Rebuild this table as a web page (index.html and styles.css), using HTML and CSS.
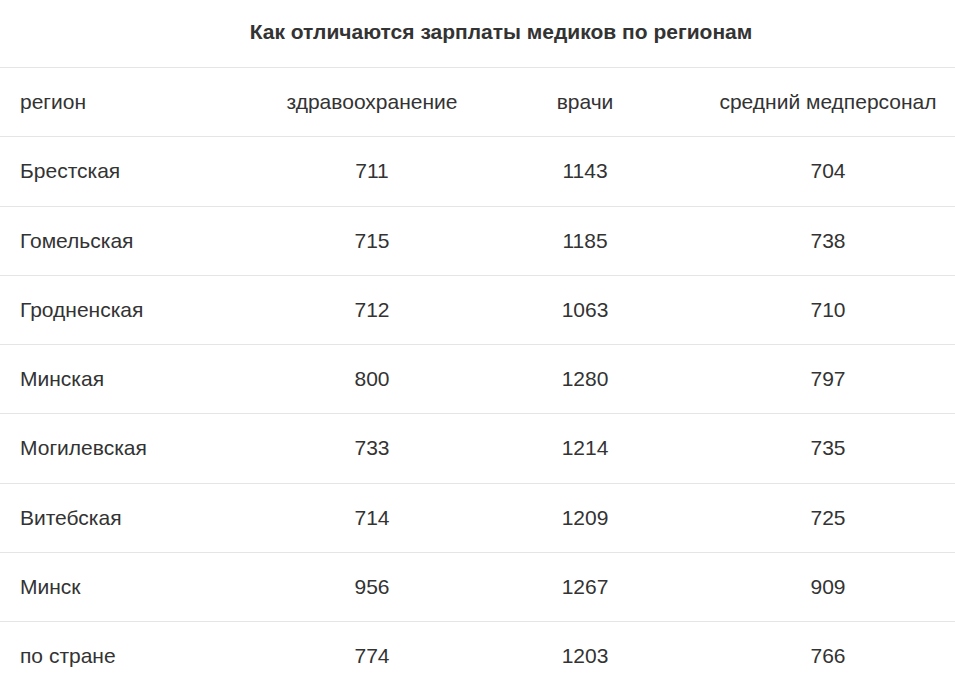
FILE: index.html
```html
<!DOCTYPE html>
<html lang="ru">
<head>
<meta charset="utf-8">
<link rel="stylesheet" href="styles.css">
</head>
<body>
<div class="wrap">
  <div class="title">Как отличаются зарплаты медиков по регионам</div>
  <table class="tbl">
    <colgroup>
      <col class="c1"><col class="c2"><col class="c3"><col class="c4">
    </colgroup>
    <tr><td>регион</td><td>здравоохранение</td><td>врачи</td><td>средний медперсонал</td></tr>
    <tr><td>Брестская</td><td>711</td><td>1143</td><td>704</td></tr>
    <tr><td>Гомельская</td><td>715</td><td>1185</td><td>738</td></tr>
    <tr><td>Гродненская</td><td>712</td><td>1063</td><td>710</td></tr>
    <tr><td>Минская</td><td>800</td><td>1280</td><td>797</td></tr>
    <tr><td>Могилевская</td><td>733</td><td>1214</td><td>735</td></tr>
    <tr><td>Витебская</td><td>714</td><td>1209</td><td>725</td></tr>
    <tr><td>Минск</td><td>956</td><td>1267</td><td>909</td></tr>
    <tr><td>по стране</td><td>774</td><td>1203</td><td>766</td></tr>
  </table>
</div>
</body>
</html>
```
FILE: styles.css
```css
html, body {
  margin: 0;
  padding: 0;
  background: #fff;
  overflow: hidden;
}
.wrap {
  width: 1002px;
  font-family: "Liberation Sans", Arial, sans-serif;
  color: #333;
}
.title {
  height: 68px;
  border-bottom: 1px solid #e5e5e5;
  display: flex;
  align-items: center;
  justify-content: center;
  font-weight: bold;
  font-size: 21px;
  padding-bottom: 4px;
  box-sizing: border-box;
}
.tbl {
  width: 1002px;
  border-collapse: collapse;
  table-layout: fixed;
  font-size: 21px;
}
.c1 { width: 228px; }
.c2 { width: 288px; }
.c3 { width: 138px; }
.c4 { width: 348px; }
.tbl td {
  height: 68.25px;
  padding: 0;
  text-align: center;
  vertical-align: middle;
  border-bottom: 1px solid #e5e5e5;
  white-space: nowrap;
}
.tbl td:first-child {
  text-align: left;
  padding-left: 20px;
}
```
